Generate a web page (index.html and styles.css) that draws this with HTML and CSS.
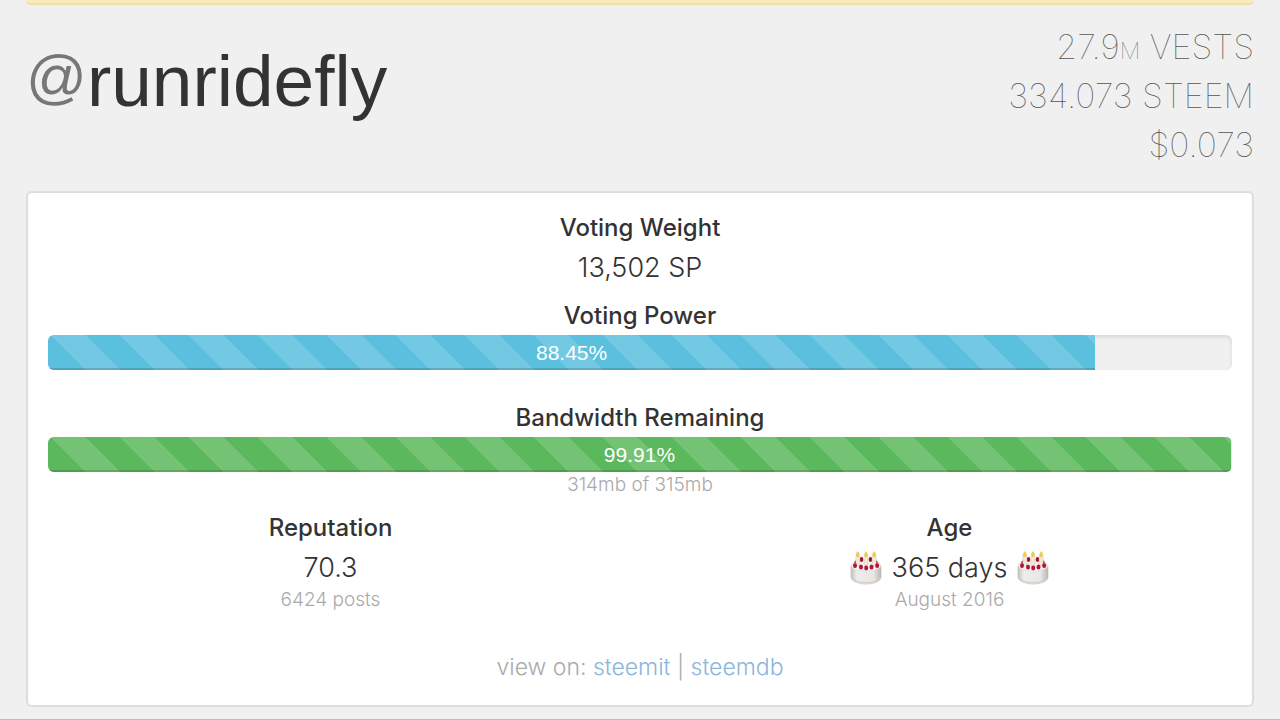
FILE: index.html
```html
<!DOCTYPE html>
<html lang="en">
<head>
<meta charset="utf-8">
<title>@runridefly</title>
<link rel="stylesheet" href="styles.css">
</head>
<body>
<svg class="defs" aria-hidden="true">
  <defs>
    <linearGradient id="cake-side" x1="0" x2="1" y1="0" y2="0">
      <stop offset="0" stop-color="#c6c2bd"/><stop offset=".2" stop-color="#efedeb"/>
      <stop offset=".75" stop-color="#e9e7e4"/><stop offset="1" stop-color="#bbb7b2"/>
    </linearGradient>
    <symbol id="cake" viewBox="0 0 32 34">
      <path d="M1 15v11c0 4 7 7 15 7s15-3 15-7V15z" fill="url(#cake-side)" stroke="#b9b5af" stroke-width=".6"/>
      <path d="M2 27c2 3 8 4.500 14 4.500S28 30 30 27" fill="none" stroke="#d0ccc7" stroke-width="1.200"/>
      <ellipse cx="16" cy="14.500" rx="15" ry="5.500" fill="#f4f2f0" stroke="#d6d2cd" stroke-width=".5"/>
      <g fill="#a50f35">
        <ellipse cx="11.500" cy="8.500" rx="1.800" ry="2.400"/><ellipse cx="20.500" cy="8.500" rx="1.800" ry="2.400"/>
        <circle cx="6" cy="11" r="1.600"/><circle cx="26" cy="11" r="1.600"/>
      </g>
      <g fill="#f3e8d4" stroke="#c9bda9" stroke-width=".4">
        <rect x="5.800" y="5" width="4" height="10" rx="1"/>
        <rect x="14" y="5" width="4" height="10" rx="1"/>
        <rect x="22.200" y="5" width="4" height="10" rx="1"/>
      </g>
      <g fill="#f2d23c" stroke="#c9a43a" stroke-width=".3">
        <path d="M7.800 .5c2.400 3 2 5 0 5s-2.400-2 0-5zM16 .5c2.400 3 2 5 0 5s-2.400-2 0-5zM24.200 .5c2.400 3 2 5 0 5s-2.400-2 0-5z"/>
      </g>
      <g fill="#b4143c">
        <ellipse cx="5" cy="14.500" rx="2" ry="2.500"/><ellipse cx="11" cy="16" rx="2" ry="2.500"/>
        <ellipse cx="16.200" cy="17" rx="2" ry="2.400"/><ellipse cx="21.500" cy="16" rx="2" ry="2.500"/>
        <ellipse cx="27.200" cy="14.500" rx="2" ry="2.500"/>
      </g>
    </symbol>
  </defs>
</svg>
<div class="page">
  <div class="notice"></div>
  <header class="header">
    <h1 class="user"><span class="at">@</span><span>runridefly</span></h1>
    <div class="balances">
      <div>27.9<small class="unit">M</small> VESTS</div>
      <div>334.073 STEEM</div>
      <div>$0.073</div>
    </div>
  </header>
  <main class="card">
    <section class="stat">
      <h2 class="label">Voting Weight</h2>
      <p class="value">13,502 SP</p>
    </section>
    <section class="stat power">
      <h2 class="label">Voting Power</h2>
      <div class="progress"><div class="bar info" style="width:88.45%">88.45%</div></div>
    </section>
    <section class="stat bandwidth">
      <h2 class="label">Bandwidth Remaining</h2>
      <div class="progress"><div class="bar success" style="width:99.91%">99.91%</div></div>
      <p class="note">314mb of 315mb</p>
    </section>
    <div class="columns">
      <section class="stat">
        <h2 class="label">Reputation</h2>
        <p class="value">70.3</p>
        <p class="note">6424 posts</p>
      </section>
      <section class="stat">
        <h2 class="label">Age</h2>
        <p class="value"><svg class="cake" role="img" aria-label="birthday cake"><use href="#cake"/></svg><span>365 days</span><svg class="cake" role="img" aria-label="birthday cake"><use href="#cake"/></svg></p>
        <p class="note">August 2016</p>
      </section>
    </div>
    <p class="links">view on: <a href="#steemit">steemit</a> | <a href="#steemdb">steemdb</a></p>
  </main>
</div>
</body>
</html>
```
FILE: styles.css
```css
* { box-sizing: border-box; }
body {
  margin: 0;
  background: #f0f0f0;
  color: #333;
  font-family: "Liberation Sans", Arial, sans-serif;
}
h1, h2, p { margin: 0; font-weight: 400; }
.defs { display: block; width: 0; height: 0; }
.page {
  min-height: 100vh;
  padding: 0 26px 12px;
  border-bottom: 1px solid #bbb;
}
.notice {
  height: 5px;
  background: #f9ecb8;
  border-bottom: 2px solid #f0e0a8;
  border-radius: 0 0 6px 6px;
}
.header {
  display: flex;
  justify-content: space-between;
  height: 186px;
  padding-top: 17px;
}
.user {
  display: flex;
  align-items: center;
  height: 116px;
  font-size: 73px;
}
.at { padding-bottom: 8px; color: #777; font-size: 60px; }
.balances {
  font-family: Inter, sans-serif;
  font-weight: 100;
  font-size: 34px;
  line-height: 49px;
  text-align: right;
  color: #555;
}
.unit { font-size: 23px; line-height: 1; color: #777; }
.card {
  padding: 18px 20px 21px;
  background: #fff;
  border: 2px solid #ddd;
  border-radius: 6px;
  text-align: center;
}
.label {
  font-family: Inter, sans-serif;
  font-weight: 500;
  font-size: 24px;
  line-height: 34px;
}
.value {
  display: flex;
  justify-content: center;
  align-items: center;
  gap: 10px;
  font-family: Inter, sans-serif;
  font-weight: 300;
  font-size: 27px;
  line-height: 46px;
}
.power { margin-top: 8px; }
.power .label, .bandwidth .label { padding-bottom: 2px; }
.bandwidth { margin-top: 31px; }
.progress {
  height: 35px;
  background: #f0f0f0;
  border-radius: 6px;
  box-shadow: inset 0 2px 4px #0000001a;
  overflow: hidden;
}
.bar {
  height: 100%;
  color: #fff;
  font-size: 21px;
  line-height: 35px;
  background-image: linear-gradient(45deg, #ffffff26 25%, transparent 25%, transparent 50%, #ffffff26 50%, #ffffff26 75%, transparent 75%);
  background-size: 69px 69px;
  background-position: 3px 0;
  box-shadow: inset 0 -2px 0 #00000026;
}
.info { background-color: #5bc0de; }
.success { background-color: #5cb85c; }
.note {
  font-family: Inter, sans-serif;
  font-weight: 300;
  font-size: 19px;
  line-height: 26px;
  color: #aaa;
}
.columns {
  display: grid;
  grid-template-columns: 1fr 1fr;
  gap: 54px;
  margin-top: 13px;
}
.columns .note { line-height: 18px; }
.cake { width: 32px; height: 34px; }
.links {
  margin-top: 41px;
  font-family: Inter, sans-serif;
  font-weight: 300;
  font-size: 23px;
  line-height: 34px;
  color: #aaa;
}
.links a { color: #8ab6db; text-decoration: none; }
```
